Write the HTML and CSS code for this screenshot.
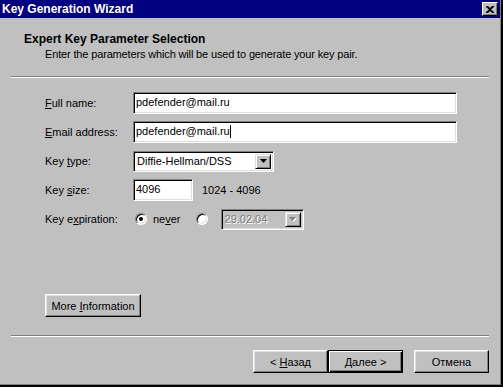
FILE: index.html
```html
<!DOCTYPE html>
<html lang="en">
<head>
  <meta charset="UTF-8">
  <title>Key Generation Wizard</title>
  <link rel="stylesheet" href="styles.css">
</head>
<body>
  <div class="window">
    <div class="titlebar">
      <span class="title">Key Generation Wizard</span>
      <button class="close-btn">
        <svg width="8" height="7" viewBox="0 0 8 7">
          <path d="M0 0h2l2 2 2-2h2v1L5 3.5 8 6v1H6L4 5 2 7H0V6l3-2.5L0 1z" fill="#000"/>
        </svg>
      </button>
    </div>

    <div class="header">
      <div class="header-title">Expert Key Parameter Selection</div>
      <div class="header-sub">Enter the parameters which will be used to generate your key pair.</div>
    </div>

    <div class="separator"></div>

    <div class="form">
      <label class="label"><u>F</u>ull name:</label>
      <div class="field wide">pdefender@mail.ru</div>

      <label class="label"><u>E</u>mail address:</label>
      <div class="field wide">pdefender@mail.ru<span class="caret"></span></div>

      <label class="label">Key <u>t</u>ype:</label>
      <div class="combo type-combo">
        <span class="combo-text">Diffie-Hellman/DSS</span>
        <span class="combo-btn">
          <svg width="7" height="4" viewBox="0 0 7 4"><path d="M0 0h7L3.5 4z" fill="#000"/></svg>
        </span>
      </div>

      <label class="label">Key <u>s</u>ize:</label>
      <div class="size-row">
        <div class="field small">4096</div>
        <span class="range">1024 - 4096</span>
      </div>

      <label class="label">Key e<u>x</u>piration:</label>
      <div class="expire-row">
        <span class="radio checked"></span>
        <span class="radio-label">ne<u>v</u>er</span>
        <span class="radio"></span>
        <div class="combo date-combo disabled">
          <span class="combo-text">29.02.04</span>
          <span class="combo-btn">
            <svg width="8" height="5" viewBox="0 0 8 5"><path d="M1 1h7L4.5 5z" fill="#fff"/><path d="M0 0h7L3.5 4z" fill="#808080"/></svg>
          </span>
        </div>
      </div>
    </div>

    <div class="more">
      <button class="btn more-btn">More <u>I</u>nformation</button>
    </div>

    <div class="separator bottom-sep"></div>

    <div class="footer">
      <button class="btn">&lt; <u>Н</u>азад</button>
      <button class="btn default">Далее &gt;</button>
      <button class="btn cancel">Отмена</button>
    </div>
  </div>
</body>
</html>
```

FILE: styles.css
```css
* {
  box-sizing: border-box;
  margin: 0;
  padding: 0;
}

body {
  font-family: "Liberation Sans", Arial, sans-serif;
  font-size: 11px;
  color: #000;
  background: #c0c0c0;
}

u {
  text-decoration: underline;
  text-underline-offset: 1px;
}

.window {
  width: 503px;
  height: 387px;
  background: #c0c0c0;
  border-right: 2px solid #000;
  border-bottom: 2px solid #000;
  box-shadow: inset -1px -1px 0 #808080;
  padding-right: 1px;
  padding-bottom: 1px;
}

/* title bar */
.titlebar {
  height: 18px;
  background: #000080;
  display: flex;
  align-items: center;
  justify-content: space-between;
  padding: 0 2px 0 2px;
}

.title {
  color: #fff;
  font-weight: bold;
  font-size: 12px;
}

.close-btn {
  width: 16px;
  height: 14px;
  background: #c0c0c0;
  border: 1px solid;
  border-color: #fff #000 #000 #fff;
  box-shadow: inset -1px -1px 0 #808080;
  display: flex;
  align-items: center;
  justify-content: center;
}

/* header */
.header {
  height: 58px;
  padding: 14px 0 0 24px;
}

.header-title {
  font-weight: bold;
  font-size: 12px;
  line-height: 14px;
}

.header-sub {
  padding-left: 21px;
  line-height: 14px;
  margin-top: 1px;
  letter-spacing: -0.15px;
}

.separator {
  margin: 0 11px;
  border-top: 1px solid #808080;
  border-bottom: 1px solid #fff;
}

/* form */
.form {
  display: grid;
  grid-template-columns: 88px 1fr;
  grid-auto-rows: 22px;
  row-gap: 7px;
  align-items: center;
  padding: 14px 0 0 45px;
}

.field {
  height: 22px;
  background: #fff;
  border: 1px solid;
  border-color: #808080 #fff #fff #808080;
  box-shadow: inset 1px 1px 0 #000, inset -1px -1px 0 #dfdfdf;
  padding: 0 2px;
  line-height: 19px;
}

.field.wide {
  width: 324px;
}

.field.small {
  width: 60px;
}

.caret {
  display: inline-block;
  width: 1px;
  height: 13px;
  background: #000;
  vertical-align: -3px;
}

.combo {
  height: 21px;
  border: 1px solid;
  border-color: #808080 #fff #fff #808080;
  box-shadow: inset 1px 1px 0 #000, inset -1px -1px 0 #dfdfdf;
  background: #fff;
  display: flex;
  align-items: center;
  padding: 2px;
}

.combo-text {
  flex: 1;
  padding-left: 1px;
}

.combo-btn {
  width: 16px;
  height: 15px;
  background: #c0c0c0;
  border: 1px solid;
  border-color: #dfdfdf #000 #000 #dfdfdf;
  box-shadow: inset 1px 1px 0 #fff, inset -1px -1px 0 #808080;
  display: flex;
  align-items: center;
  justify-content: center;
}

.type-combo {
  width: 141px;
}

.size-row,
.expire-row {
  display: flex;
  align-items: center;
}

.range {
  margin-left: 9px;
}

.radio {
  width: 12px;
  height: 12px;
  border-radius: 50%;
  background: #fff;
  border: 1px solid;
  border-color: #808080 #fff #fff #808080;
  box-shadow: inset 1px 1px 0 #000, inset -1px -1px 0 #dfdfdf;
  margin-left: 2px;
  display: flex;
  align-items: center;
  justify-content: center;
}

.radio.checked::after {
  content: "";
  width: 4px;
  height: 4px;
  border-radius: 50%;
  background: #000;
}

.radio-label {
  margin: 0 13px 0 6px;
}

.date-combo {
  width: 83px;
  margin-left: 13px;
  background: #c0c0c0;
}

.date-combo .combo-text {
  color: #808080;
  text-shadow: 1px 1px 0 #fff;
}

/* buttons */
.btn {
  font-family: inherit;
  font-size: 11px;
  height: 23px;
  width: 75px;
  background: #c0c0c0;
  border: 1px solid;
  border-color: #fff #000 #000 #fff;
  box-shadow: inset -1px -1px 0 #808080, inset 1px 1px 0 #dfdfdf;
  color: #000;
}

.btn.default {
  border: 1px solid #000;
  box-shadow: inset 1px 1px 0 #fff, inset -1px -1px 0 #000, inset -2px -2px 0 #808080;
}

.more {
  padding: 64px 0 0 45px;
}

.more-btn {
  width: 96px;
}

.bottom-sep {
  margin-top: 18px;
}

.footer {
  display: flex;
  justify-content: flex-end;
  padding: 13px 11px 0 0;
}

.btn.cancel {
  margin-left: 11px;
}
```
